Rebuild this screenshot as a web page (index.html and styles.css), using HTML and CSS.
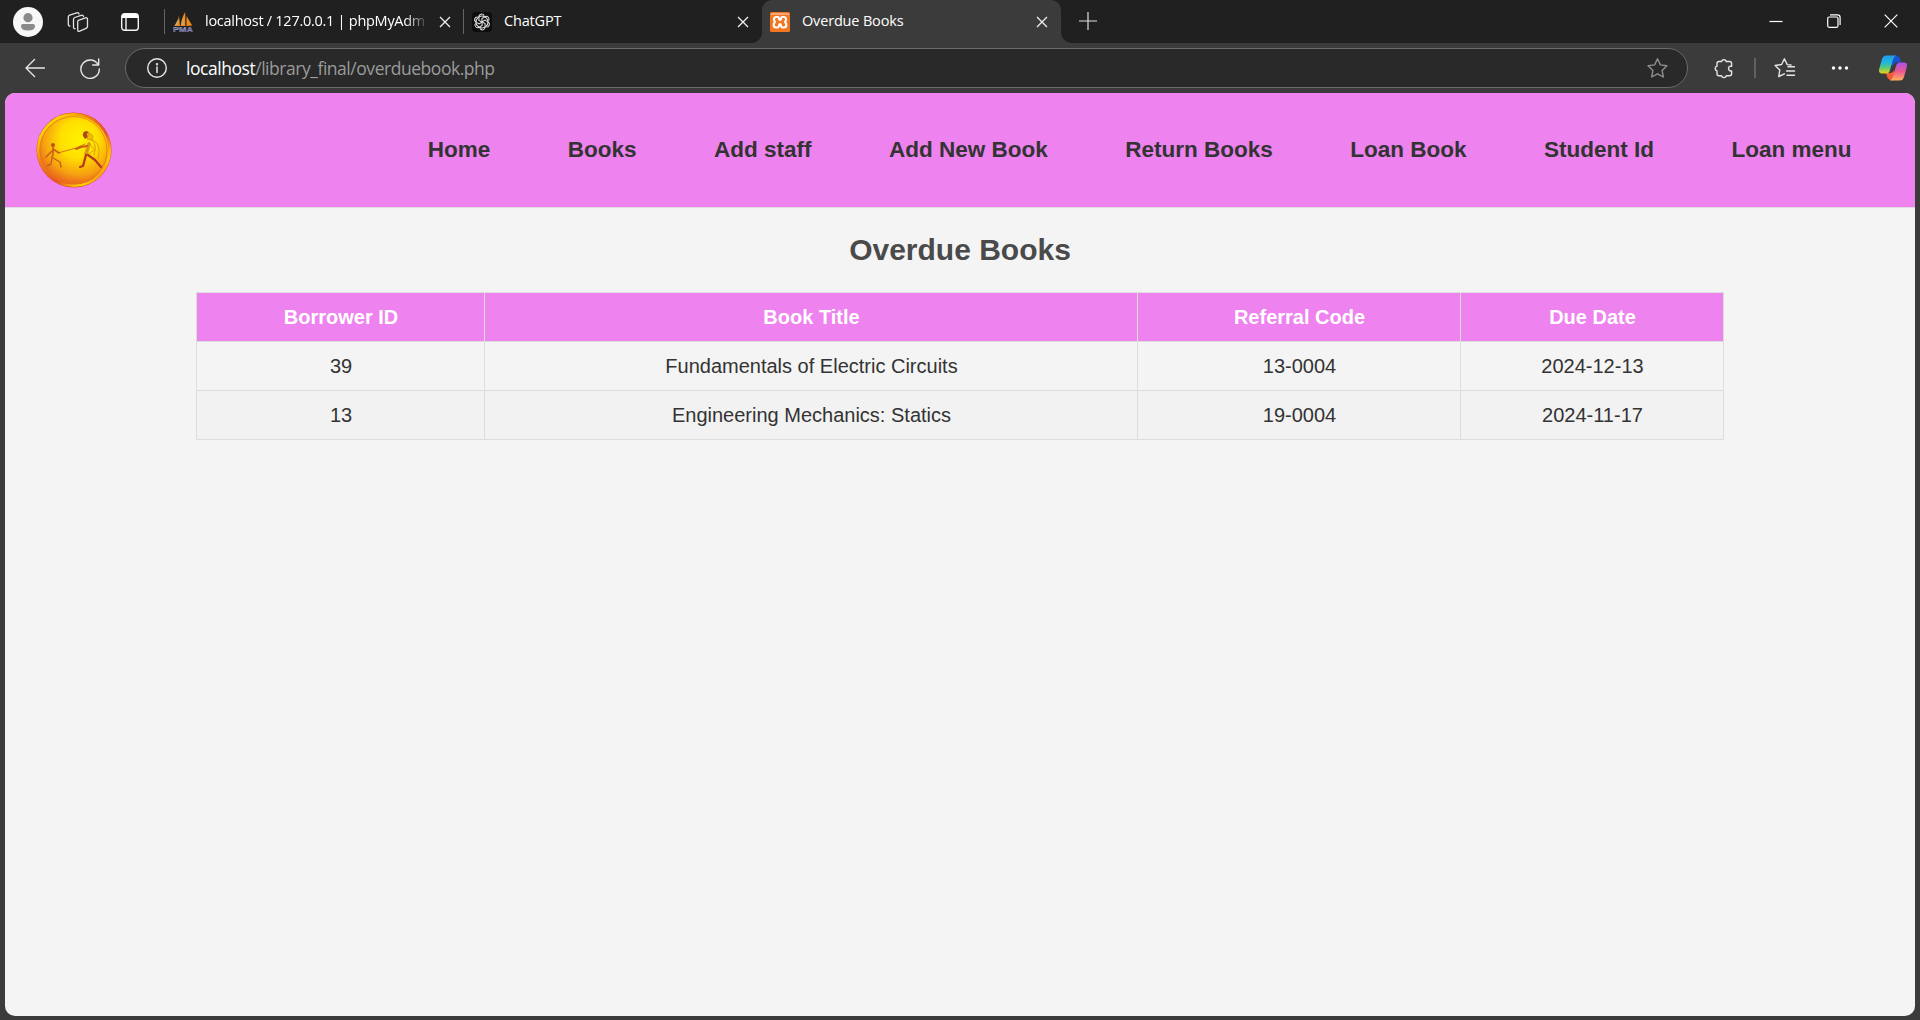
FILE: index.html
```html
<!DOCTYPE html>
<html lang="en">
<head>
<meta charset="utf-8">
<title>Overdue Books</title>
<link rel="stylesheet" href="styles.css">
</head>
<body>
<div class="browser">
  <div class="tabstrip">
    <div class="strip-tools">
      <svg class="avatar" width="30" height="30" viewBox="0 0 30 30"><circle cx="15" cy="15" r="15" fill="#f7f7f7"/><circle cx="15" cy="10.700" r="4.600" fill="#8a8a8a"/><path d="M10 17h10q2 0 2 2 0 4.500-7 4.500T8 19q0-2 2-2z" fill="#8a8a8a"/></svg>
      <svg class="workspaces" width="22" height="22" viewBox="0 0 22 22" fill="none" stroke="#e2e2e2" stroke-width="1.300" stroke-linejoin="round" stroke-linecap="round"><path d="M11.300 9.300l7.200-2.400q2-.6 2 1.400v7q0 1.500-1.400 2l-6.400 2.900q-2 .8-2-1.300v-7.600q0-1.500.6-2z"/><path d="M16.500 5.500q-.5-1.800-2.400-1.200L7.700 6.500q-1.200.5-1.200 2v7.300q0 2 1.500 1.900"/><path d="M12 3q-.5-1.800-2.300-1.200L2.600 4.100q-1.300.5-1.300 2v7q0 2 1.700 2"/></svg>
      <svg class="tabmenu" width="18" height="18" viewBox="0 0 18 18"><rect x=".7" y=".7" width="16.600" height="16.600" rx="2.800" fill="none" stroke="#f3f3f3" stroke-width="1.400"/><path d="M1 5V3q0-2 2-2h12q2 0 2 2v2z" fill="#fff"/><path d="M5 5v12" stroke="#f3f3f3" stroke-width="1.400"/></svg>
    </div>
    <div class="tab tab-first">
      <svg class="favicon" width="20" height="20" viewBox="0 0 20 20"><path d="M6 3.500Q5.500 10 1 14h6zM12.200 0Q8.500 6 7.600 14h4.800zM13.500 4l5.700 9.500-5.700.5z" fill="#f08a17"/><path d="M5.600 6L5 13H2zM11.500 3l-.8 10H8z" fill="#c9a56a"/><text class="pma" x="0" y="19.500" textLength="20" lengthAdjust="spacingAndGlyphs">PMA</text></svg>
      <span class="tab-title title-pma">localhost / 127.0.0.1 | phpMyAdm</span>
      <svg class="close" width="12" height="12" viewBox="0 0 12 12"><path d="M1 1l10 10M11 1L1 11"/></svg>
    </div>
    <div class="tab tab-second">
      <svg class="favicon" width="20" height="20" viewBox="0 0 20 20"><rect width="20" height="20" rx="4" fill="#0d0d0d"/><g fill="none" stroke="#e0e0e0" stroke-width="1.050"><path d="M9.900 10.100V6.500l3-1.700a2.700 2.700 0 0 1 3.600 3.900"/><path d="M9.900 10.100V6.500l3-1.700a2.700 2.700 0 0 1 3.600 3.900" transform="rotate(60 10 10)"/><path d="M9.900 10.100V6.500l3-1.700a2.700 2.700 0 0 1 3.600 3.900" transform="rotate(120 10 10)"/><path d="M9.900 10.100V6.500l3-1.700a2.700 2.700 0 0 1 3.600 3.900" transform="rotate(180 10 10)"/><path d="M9.900 10.100V6.500l3-1.700a2.700 2.700 0 0 1 3.600 3.900" transform="rotate(240 10 10)"/><path d="M9.900 10.100V6.500l3-1.700a2.700 2.700 0 0 1 3.600 3.900" transform="rotate(300 10 10)"/><circle cx="10" cy="10" r="6"/></g></svg>
      <span class="tab-title">ChatGPT</span>
      <svg class="close" width="12" height="12" viewBox="0 0 12 12"><path d="M1 1l10 10M11 1L1 11"/></svg>
    </div>
    <div class="tab tab-active">
      <svg class="favicon" width="20" height="20" viewBox="0 0 20 20"><rect width="20" height="20" rx="1.500" fill="#f47621"/><path d="M1 1h18v2H1z" fill="#f8a878"/><path d="M8 5H6.500Q4 5 4 7.300 4 9 5 10q-1.300 1.300-1.300 3 0 2.500 2.500 2.500h1.100q1.500 0 1.700-2 .2-1.500 1-1.500t1 1.500q.2 2 1.700 2h1.100q2.500 0 2.500-2.500 0-1.700-1.300-3 1-1 1-2.700Q16 5 13.500 5H12.500q-1.300 0-1.500 1.500Q10.800 8 10 8T9 6.500Q8.800 5 8 5z" fill="none" stroke="#fff" stroke-width="2.100" stroke-linejoin="round"/></svg>
      <span class="tab-title">Overdue Books</span>
      <svg class="close" width="12" height="12" viewBox="0 0 12 12"><path d="M1 1l10 10M11 1L1 11"/></svg>
    </div>
    <svg class="newtab" width="18" height="18" viewBox="0 0 18 18"><path d="M9 0v18M0 9h18" stroke="#e0e0e0" stroke-width="1.200"/></svg>
    <div class="window-controls">
      <svg width="14" height="14" viewBox="0 0 14 14"><path d="M.5 7.500h13"/></svg>
      <svg width="14" height="14" viewBox="0 0 14 14"><rect x=".7" y="3" width="10.300" height="10.300" rx="1.500"/><path d="M3 .8h7.500q2.600 0 2.600 2.600V11"/></svg>
      <svg width="14" height="14" viewBox="0 0 14 14"><path d="M.7.7l12.600 12.600M13.300.7L.7 13.300"/></svg>
    </div>
  </div>
  <div class="toolbar">
    <svg class="back" width="20" height="20" viewBox="0 0 20 20"><path d="M19.500 10H1M9.500 1.500L1 10l8.500 8.500"/></svg>
    <svg class="reload" width="20" height="21" viewBox="0 0 20 21"><path d="M18.300 7A9.200 9.200 0 1 0 19.300 11M18.700 1v6h-6"/></svg>
    <div class="address">
      <svg class="info" width="20" height="20" viewBox="0 0 20 20"><circle cx="10" cy="10" r="9.300"/><path d="M10 9v5.500" stroke-width="1.500"/><circle cx="10" cy="6.200" r=".5"/></svg>
      <span class="url"><span class="host">localhost</span>/library_final/overduebook.php</span>
      <svg class="star" width="21" height="20" viewBox="0 0 21 20"><path d="M10.500.8l2.900 6.100 6.500.9-4.800 4.600 1.200 6.600-5.800-3.200L4.700 19l1.200-6.600L1.100 7.800l6.500-.9z"/></svg>
    </div>
    <div class="toolbar-icons">
      <svg class="puzzle" width="19" height="21" viewBox="0 0 19 21"><path d="M7.500 3.500a2.500 2.500 0 0 1 4.800 0h3.300q2 0 2 2v2.700h-1.300a2.500 2.500 0 0 0 0 4.800h1.300v2.800q0 2-2 2h-3.300a2.500 2.500 0 0 1-4.800 0H5q-2 0-2-2V13a2.500 2.500 0 0 1 0-4.800V5.500q0-2 2-2z"/></svg>
      <span class="separator"></span>
      <svg class="favorites" width="22" height="20" viewBox="0 0 22 20"><path d="M17 7l-3.700-.4L10.400.8 7.600 6.500l-6.500 1 4.700 4.600-1.100 6.400 5.700-2.700M14 8.700h6.500M12.500 13h8M13 17.300h7.500"/></svg>
      <svg class="more" width="18" height="6" viewBox="0 0 18 6"><circle cx="2.500" cy="3" r="1.700"/><circle cx="9" cy="3" r="1.700"/><circle cx="15.500" cy="3" r="1.700"/></svg>
      <svg class="copilot" width="28" height="26" viewBox="0 0 28 26"><defs><linearGradient id="cool" x1="0" y1="0" x2="0" y2="1"><stop offset="0" stop-color="#229bea"/><stop offset=".4" stop-color="#22b7dc"/><stop offset=".68" stop-color="#5ac878"/><stop offset="1" stop-color="#f2d313"/></linearGradient><linearGradient id="warm" x1="0" y1="0" x2="0" y2="1"><stop offset="0" stop-color="#a553ee"/><stop offset=".5" stop-color="#ef578d"/><stop offset="1" stop-color="#ffb25c"/></linearGradient></defs><path d="M14 .5h3.500Q20 .5 21 4l1 3.500h-4q-3 0-4.200 4L12 8z" fill="#1752cf"/><path d="M7 18h4q3 0 4-3l1 5q-1 5.500-3 5.500T8.500 23z" fill="#f45d33"/><path d="M7.500.5H17q-2.300 1-3.300 5L11 15q-.9 3.500-4 3.500H3q-4 0-2.700-5L3 4Q4 .5 7.500.5z" fill="url(#cool)"/><path d="M20.500 25.500H11q2.300-1 3.300-5L17 11q.9-3.500 4-3.500h4q4 0 2.700 5L25 22q-1 3.500-4.500 3.500z" fill="url(#warm)"/></svg>
    </div>
  </div>
  <div class="page">
    <header class="site-header">
      <svg class="logo" width="76" height="76" viewBox="0 0 76 76">
        <defs><radialGradient id="gold" cx=".57" cy=".35" r=".66"><stop offset="0" stop-color="#fff200"/><stop offset=".4" stop-color="#ffdf00"/><stop offset=".75" stop-color="#f6a010"/><stop offset="1" stop-color="#e95a20"/></radialGradient><linearGradient id="rim" x1="0" y1="0" x2="1" y2="1"><stop offset="0" stop-color="#d94a24"/><stop offset=".15" stop-color="#ffd900"/><stop offset=".35" stop-color="#ed8215"/><stop offset=".6" stop-color="#e65522"/><stop offset=".8" stop-color="#ffd400"/><stop offset="1" stop-color="#dc3b25"/></linearGradient></defs>
        <circle cx="38" cy="38" r="37.500" fill="#dd4b25"/><circle cx="38" cy="38" r="35.800" fill="url(#gold)" stroke="url(#rim)" stroke-width="2.500"/><circle cx="37.500" cy="38" r="33.500" fill="none" stroke="#e87818" stroke-width=".8"/>
        <g fill="none" stroke="#c8601a" stroke-linecap="round" stroke-linejoin="round"><path d="M22 41l18-5 9-4" stroke-width=".8"/><path d="M17 35v7l-1 3M17 37l6 4M17 38l-7 7" stroke-width="1.600"/><path d="M16 46l-1 6-4 2M17 46l7 4 1 5" stroke-width="1.400"/><path d="M53 32l-3 10" stroke="#dc9a12" stroke-width="3.500"/><path d="M51 34l-6 1-5 2" stroke-width="2"/><path d="M50 43l-3 11-3 1M52 43l7 5 6 7" stroke-width="2.300" stroke="#b83a20"/><path d="M53 27q11 2 10 13l-1 7" stroke-width="1" stroke="#dfa010"/><path d="M57 29q4 5 1 14M53 31l6 7-7 4" stroke="#d79010" stroke-width=".8"/></g>
        <circle cx="17" cy="33" r="2" fill="#bc521b"/><path d="M47 24q-1-4 3-5l3 1-2 2 1 3-3 2z" fill="#b0481b"/><path d="M53 21q6 3 3 7l-5-1z" fill="#edbd08" stroke="#d08c12" stroke-width=".7"/>
      </svg>
      <nav class="nav"><a>Home</a><a>Books</a><a>Add staff</a><a>Add New Book</a><a>Return Books</a><a>Loan Book</a><a>Student Id</a><a>Loan menu</a></nav>
    </header>
    <main>
      <h2>Overdue Books</h2>
      <table>
        <colgroup><col class="c1"><col class="c2"><col class="c3"><col class="c4"></colgroup>
        <thead><tr><th>Borrower ID</th><th>Book Title</th><th>Referral Code</th><th>Due Date</th></tr></thead>
        <tbody>
          <tr><td>39</td><td>Fundamentals of Electric Circuits</td><td>13-0004</td><td>2024-12-13</td></tr>
          <tr><td>13</td><td>Engineering Mechanics: Statics</td><td>19-0004</td><td>2024-11-17</td></tr>
        </tbody>
      </table>
    </main>
  </div>
</div>
</body>
</html>
```
FILE: styles.css
```css
* { box-sizing: border-box; }
body { margin: 0; font-family: "Open Sans", "Noto Sans", sans-serif; background: #3b3b3b; }
svg { display: block; flex: none; }
.browser { display: flex; flex-direction: column; width: 1920px; height: 1020px; overflow: hidden; }
.tabstrip { display: flex; height: 43px; background: #202020; flex: none; }
.strip-tools { display: flex; align-items: center; width: 164px; padding-left: 13px; flex: none; }
.workspaces { margin-left: 24px; }
.tabmenu { margin-left: 32px; }
.tab { display: flex; align-items: center; color: #fff; flex: none; position: relative; }
.tab-first::before, .tab-second::before { content: ""; width: 1px; height: 25px; background: #666; }
.tab-first { width: 299px; padding-right: 12px; }
.tab-second { width: 299px; padding-right: 13px; }
.tab-active { width: 299px; background: #3b3b3b; border-radius: 10px 10px 0 0; padding: 0 13px 0 8px; }
.tab-active::before, .tab-active::after { content: ""; position: absolute; bottom: 0; width: 10px; height: 10px; }
.tab-active::before { left: -10px; background: radial-gradient(circle at 0 0, #202020 9.5px, #3b3b3b 10px); }
.tab-active::after { right: -10px; background: radial-gradient(circle at 100% 0, #202020 9.5px, #3b3b3b 10px); }
.favicon { margin-left: 8px; margin-top: 1px; }
.tab-active .favicon { margin-left: 0; }
.pma { font: bold 8px "Liberation Sans", sans-serif; fill: #55558c; stroke: #d0d0e8; stroke-width: .25px; }
.tab-title { flex: 1; min-width: 0; margin-left: 12px; font-size: 14.5px; line-height: 20px; letter-spacing: -.17px; white-space: nowrap; margin-top: -2px; }
.title-pma { flex: 0 0 224px; letter-spacing: -.27px; -webkit-mask-image: linear-gradient(90deg, #000 200px, transparent 224px); mask-image: linear-gradient(90deg, #000 200px, transparent 224px); }
.close { fill: none; stroke: #f0f0f0; stroke-width: 1.3; margin-left: auto; margin-top: 1px; }
.newtab { margin: 12px 0 0 18px; }
.window-controls { display: flex; gap: 43.5px; margin-left: auto; padding: 14px 22px 0 0; fill: none; stroke: #fff; stroke-width: 1.2; }
.toolbar { display: flex; align-items: center; height: 50px; padding-left: 25px; flex: none; fill: none; stroke: #e6e6e6; stroke-width: 1.4; stroke-linecap: round; stroke-linejoin: round; }
.reload { margin-left: 35px; }
.address { display: flex; align-items: center; width: 1563px; height: 40px; margin-left: 25px; border: 1px solid #6a6a6a; border-radius: 20px; background: #292929; padding: 0 19px 0 21px; }
.url { margin-left: 19px; font-size: 17.5px; letter-spacing: -.46px; line-height: 26px; color: #9b9b9b; flex: 1; margin-top: -1px; }
.host { color: #fff; }
.star { stroke: #8f8f8f; }
.toolbar-icons { display: flex; align-items: center; margin-left: 26px; flex: none; }
.separator { width: 2px; height: 20px; background: #606060; margin-left: 21px; }
.favorites { margin-left: 18px; }
.more { margin-left: 35px; fill: #fff; stroke: none; }
.copilot { margin-left: 30px; stroke: none; }
.page { flex: 1; margin: 0 5px 4px; border-radius: 10px; overflow: hidden; background: #f4f4f4; font-family: "Liberation Sans", Arial, sans-serif; color: #333; }
.site-header { display: flex; align-items: center; height: 115px; padding: 0 63.5px 0 31px; background: #ee82ee; border-bottom: 1px solid #ddd; }
.nav { display: flex; gap: 77.5px; margin-left: auto; font-size: 22.5px; font-weight: bold; line-height: 26px; white-space: nowrap; }
h2 { margin: 24px 0 25px; font-size: 30px; line-height: 35px; text-align: center; color: #4a4a4a; }
table { width: 1527px; margin: 0 0 0 191px; border-collapse: collapse; table-layout: fixed; font-size: 20px; }
.c1 { width: 288px; }
.c2 { width: 653px; }
.c3 { width: 323px; }
.c4 { width: 263px; }
th, td { height: 49px; padding: 0 12px 0 13px; border: 1px solid #ddd; text-align: center; line-height: 23px; }
th { background: #ee82ee; color: #fff; }
tbody tr:nth-child(even) { background: #f2f2f2; }
```
